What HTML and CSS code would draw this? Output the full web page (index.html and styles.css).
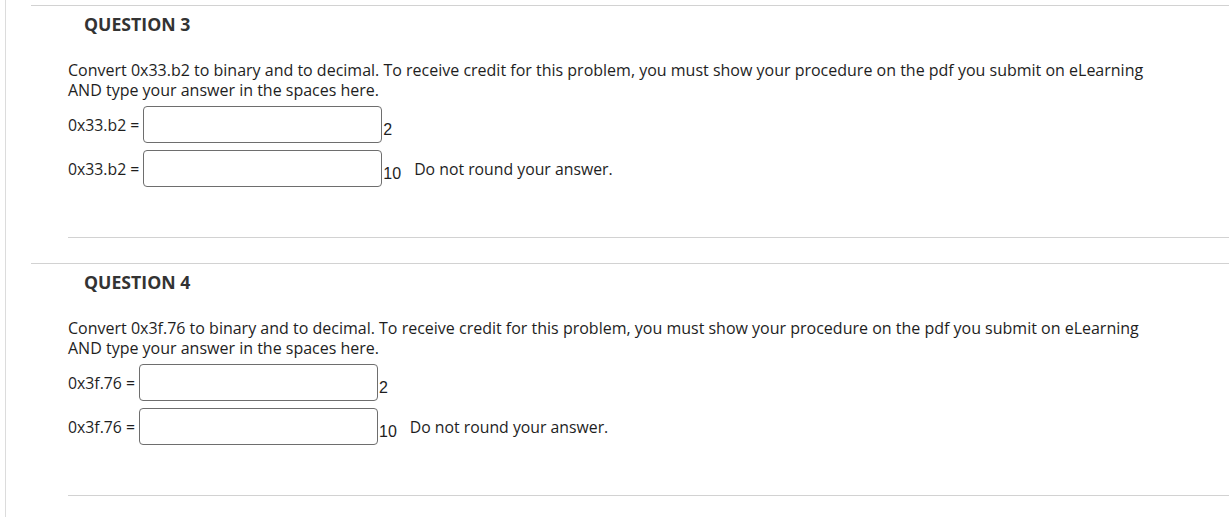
FILE: index.html
```html
<!DOCTYPE html>
<html>
<head>
<meta charset="utf-8">
<link rel="stylesheet" href="styles.css">
</head>
<body>
<div class="page">
  <section class="question">
    <h2 class="q-title">QUESTION 3</h2>
    <div class="q-body">
      <p class="q-text">Convert 0x33.b2 to binary and to decimal. To receive credit for this problem, you must show your procedure on the pdf you submit on eLearning AND type your answer in the spaces here.</p>
      <div class="answer-row">
        <span class="label">0x33.b2 =</span>
        <input class="answer" type="text">
        <span class="base">2</span>
      </div>
      <div class="answer-row">
        <span class="label">0x33.b2 =</span>
        <input class="answer" type="text">
        <span class="base">10</span>
        <span class="note">Do not round your answer.</span>
      </div>
    </div>
    <div class="q-sep"></div>
  </section>
  <section class="question">
    <h2 class="q-title">QUESTION 4</h2>
    <div class="q-body">
      <p class="q-text">Convert 0x3f.76 to binary and to decimal. To receive credit for this problem, you must show your procedure on the pdf you submit on eLearning AND type your answer in the spaces here.</p>
      <div class="answer-row">
        <span class="label">0x3f.76 =</span>
        <input class="answer" type="text">
        <span class="base">2</span>
      </div>
      <div class="answer-row">
        <span class="label">0x3f.76 =</span>
        <input class="answer" type="text">
        <span class="base">10</span>
        <span class="note">Do not round your answer.</span>
      </div>
    </div>
    <div class="q-sep"></div>
  </section>
</div>
</body>
</html>
```
FILE: styles.css
```css
html, body {
  margin: 0;
  padding: 0;
  background: #fff;
}
body {
  font-family: "Open Sans", "Liberation Sans", sans-serif;
  color: #1e1e1e;
  height: 517px;
  overflow: hidden;
}
.page {
  margin-left: 5px;
  border-left: 1px solid #dcdcdc;
  min-height: 517px;
  padding-top: 5px;
  box-sizing: border-box;
}
.question {
  margin-left: 25px;
  border-top: 1px solid #d2d2d2;
  margin-bottom: 25px;
}
.q-title {
  margin: 0;
  padding: 6px 0 0 53px;
  font-size: 17.7px;
  line-height: 24px;
  font-weight: 700;
  color: #333;
}
.q-body {
  padding: 24px 0 0 37px;
}
.q-text {
  margin: 0;
  font-size: 16px;
  line-height: 20px;
  max-width: 1085px;
}
.answer-row {
  display: flex;
  align-items: center;
  margin-top: 7px;
}
.q-text + .answer-row {
  margin-top: 6px;
}
.label {
  font-size: 15.8px;
  margin-right: 4px;
  white-space: nowrap;
}
.answer {
  width: 239px;
  height: 37px;
  box-sizing: border-box;
  border: 1px solid #6e6e6e;
  border-radius: 4px;
  margin: 0;
  padding: 0;
  background: #fff;
}
.base {
  font-family: "Liberation Sans", Arial, sans-serif;
  font-size: 16px;
  margin-top: 11px;
  margin-left: 1px;
}
.note {
  font-size: 15.8px;
  margin-left: 13px;
}
.q-sep {
  margin: 50px 0 0 37px;
  border-top: 1px solid #d2d2d2;
}
```
